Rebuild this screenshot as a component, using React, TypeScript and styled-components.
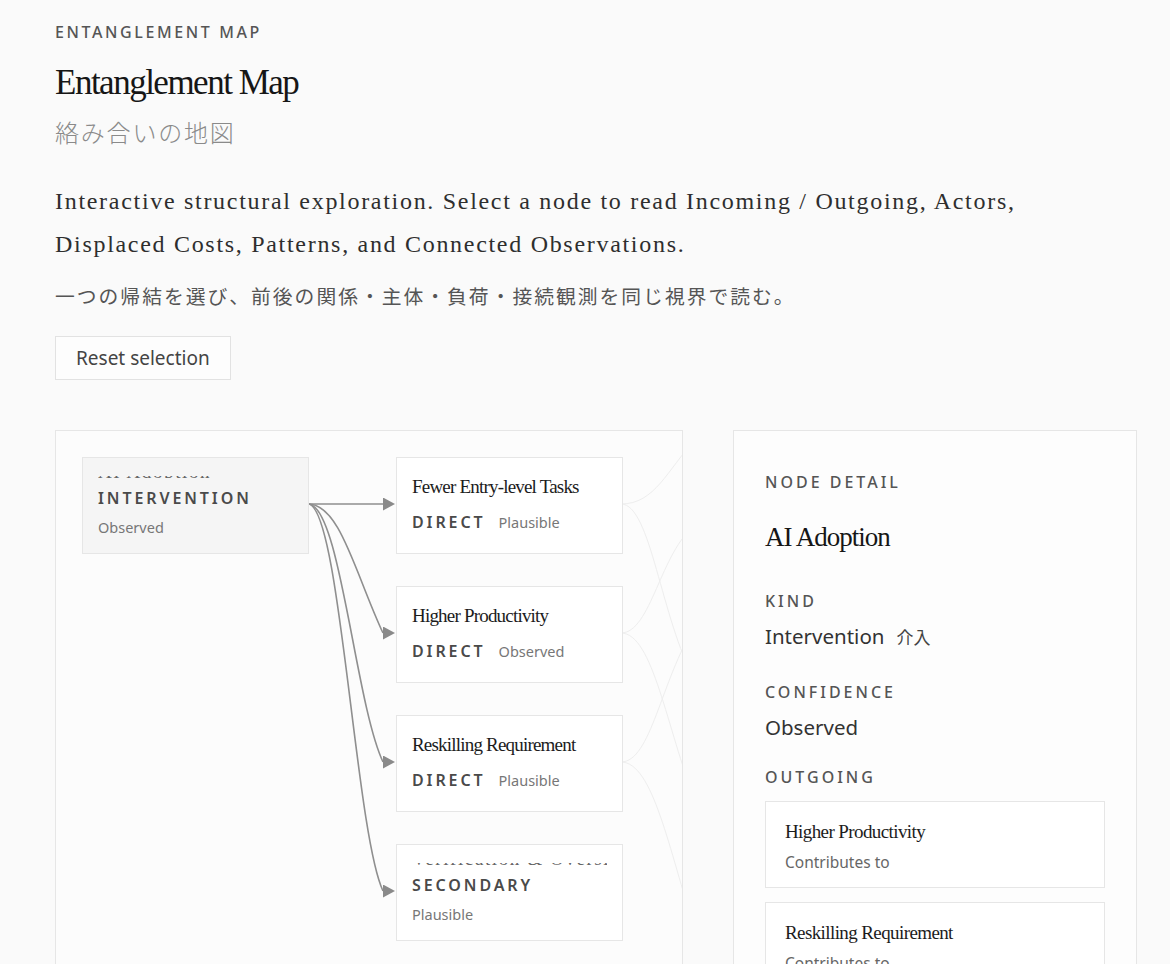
import React, { FC } from 'react';
import styled, { createGlobalStyle } from 'styled-components';

type MapNode = {
  id: string;
  title: string;
  kind: string;
  confidence: string;
  left: number;
  top: number;
  selected?: boolean;
  folded?: boolean;
};

type Outgoing = {
  title: string;
  relation: string;
};

const SANS = `'Noto Sans', 'Open Sans', 'Noto Sans CJK JP', sans-serif`;
const SERIF = `'Liberation Serif', 'Noto Sans CJK JP', serif`;
const JP = `'Noto Sans CJK JP', sans-serif`;

const NODES: MapNode[] = [
  { id: 'ai', title: 'AI Adoption', kind: 'INTERVENTION', confidence: 'Observed', left: 26, top: 26, selected: true, folded: true },
  { id: 'fewer', title: 'Fewer Entry-level Tasks', kind: 'DIRECT', confidence: 'Plausible', left: 340, top: 26 },
  { id: 'prod', title: 'Higher Productivity', kind: 'DIRECT', confidence: 'Observed', left: 340, top: 155 },
  { id: 'reskill', title: 'Reskilling Requirement', kind: 'DIRECT', confidence: 'Plausible', left: 340, top: 284 },
  { id: 'verify', title: 'Verification & Oversight Burden', kind: 'SECONDARY', confidence: 'Plausible', left: 340, top: 413, folded: true },
];

const OUTGOING: Outgoing[] = [
  { title: 'Higher Productivity', relation: 'Contributes to' },
  { title: 'Reskilling Requirement', relation: 'Contributes to' },
];

// edge geometry, in panel coordinates
const EDGE_START = { x: 253, y: 74 };
const EDGE_END_X = 328;
const TARGET_YS = [74, 203, 332, 461];

const edgePath = (y: number) => {
  if (y === EDGE_START.y) return `M${EDGE_START.x},${y} L${EDGE_END_X},${y}`;
  return `M${EDGE_START.x},${EDGE_START.y} C${EDGE_START.x + 32},${EDGE_START.y} ${EDGE_END_X - 28},${y - 60} ${EDGE_END_X},${y}`;
};

// faint links running off toward the next column
const FAINT_LINKS = [
  'M566,74 C596,74 606,190 640,250',
  'M566,203 C596,203 606,120 640,96',
  'M566,203 C598,203 612,300 640,370',
  'M566,332 C596,332 606,250 640,196',
  'M566,332 C598,332 614,420 640,500',
  'M566,74 C600,74 612,40 640,10',
];

const GlobalStyle = createGlobalStyle`
  html, body {
    margin: 0;
    background: #fafafa;
  }
  * {
    box-sizing: border-box;
  }
`;

const App: FC = () => {
  return (
    <>
      <GlobalStyle />
      <Page>
        <Eyebrow>ENTANGLEMENT MAP</Eyebrow>
        <Title>Entanglement Map</Title>
        <Subtitle>絡み合いの地図</Subtitle>
        <Lead>
          Interactive structural exploration. Select a node to read Incoming / Outgoing, Actors, Displaced Costs,
          Patterns, and Connected Observations.
        </Lead>
        <LeadJa>一つの帰結を選び、前後の関係・主体・負荷・接続観測を同じ視界で読む。</LeadJa>
        <ResetButton type="button">Reset selection</ResetButton>

        <Workspace>
          <GraphPanel>
            <EdgeLayer width="700" height="620" viewBox="0 0 700 620">
              <defs>
                <marker id="arrow" viewBox="0 0 12 13" refX="0" refY="6.5" markerWidth="12" markerHeight="13" markerUnits="userSpaceOnUse" orient="0">
                  <path d="M0,0 L12,6.5 L0,13 Z" fill="#8a8a8a" />
                </marker>
              </defs>
              {FAINT_LINKS.map((d) => (
                <path key={d} d={d} fill="none" stroke="#eeeeee" strokeWidth="1" />
              ))}
              {TARGET_YS.map((y) => (
                <path key={y} d={edgePath(y)} fill="none" stroke="#8f8f8f" strokeWidth="1.6" markerEnd="url(#arrow)" />
              ))}
            </EdgeLayer>

            {NODES.map((node) => (
              <NodeCard key={node.id} $selected={!!node.selected} style={{ left: node.left, top: node.top }}>
                {node.folded ? (
                  <>
                    <TitleFold>
                      <NodeTitle>{node.title}</NodeTitle>
                    </TitleFold>
                    <KindLabel $stacked>{node.kind}</KindLabel>
                    <Confidence $stacked>{node.confidence}</Confidence>
                  </>
                ) : (
                  <>
                    <NodeTitle>{node.title}</NodeTitle>
                    <MetaRow>
                      <KindLabel>{node.kind}</KindLabel>
                      <Confidence>{node.confidence}</Confidence>
                    </MetaRow>
                  </>
                )}
              </NodeCard>
            ))}
          </GraphPanel>

          <DetailPanel>
            <SectionLabel>NODE DETAIL</SectionLabel>
            <DetailTitle>AI Adoption</DetailTitle>

            <SectionLabel $gap={35}>KIND</SectionLabel>
            <DetailValue>
              Intervention<ValueNote>介入</ValueNote>
            </DetailValue>

            <SectionLabel $gap={29}>CONFIDENCE</SectionLabel>
            <DetailValue>Observed</DetailValue>

            <SectionLabel $gap={24}>OUTGOING</SectionLabel>
            <LinkList>
              {OUTGOING.map((link) => (
                <LinkCard key={link.title}>
                  <LinkTitle>{link.title}</LinkTitle>
                  <LinkRelation>{link.relation}</LinkRelation>
                </LinkCard>
              ))}
            </LinkList>
          </DetailPanel>
        </Workspace>
      </Page>
    </>
  );
};

const Page = styled.div`
  padding: 20px 33px 0 55px;
  height: 964px;
  overflow: hidden;
`;

const Eyebrow = styled.div`
  font-family: ${SANS};
  font-size: 16px;
  line-height: 24px;
  font-weight: 500;
  letter-spacing: 2.6px;
  color: #555;
`;

const Title = styled.h1`
  margin: 17px 0 0;
  font-family: ${SERIF};
  font-weight: 400;
  font-size: 35px;
  line-height: 44px;
  letter-spacing: -1.5px;
  color: #161616;
`;

const Subtitle = styled.div`
  margin-top: 9px;
  font-family: ${JP};
  font-weight: 300;
  font-size: 24px;
  line-height: 36px;
  letter-spacing: 1.8px;
  color: #8a8a8a;
`;

const Lead = styled.p`
  margin: 30px 0 0;
  max-width: 1000px;
  font-family: ${SERIF};
  font-size: 24px;
  line-height: 43px;
  letter-spacing: 1.7px;
  color: #2e2e2e;
`;

const LeadJa = styled.p`
  margin: 15px 0 0;
  font-family: ${JP};
  font-size: 19.8px;
  line-height: 30px;
  letter-spacing: 2px;
  color: #555;
`;

const ResetButton = styled.button`
  display: block;
  margin-top: 25px;
  height: 44px;
  padding: 0 20px;
  font-family: ${SANS};
  font-size: 19px;
  color: #444;
  background: #fdfdfd;
  border: 1px solid #e2e2e2;
  border-radius: 0;
  cursor: pointer;
`;

const Workspace = styled.div`
  display: grid;
  grid-template-columns: 628px 404px;
  gap: 50px;
  margin-top: 50px;
  align-items: start;
`;

const GraphPanel = styled.div`
  position: relative;
  height: 620px;
  background: #fcfcfc;
  border: 1px solid #e6e6e6;
  overflow: hidden;
`;

const EdgeLayer = styled.svg`
  position: absolute;
  left: -1px;
  top: -1px;
  pointer-events: none;
`;

const NodeCard = styled.div<{ $selected: boolean }>`
  position: absolute;
  width: 227px;
  height: 97px;
  padding: 15px 15px 0;
  background: ${({ $selected }) => ($selected ? '#f5f5f5' : '#fff')};
  border: 1px solid #e6e6e6;
  cursor: pointer;
`;

const NodeTitle = styled.div`
  font-family: ${SERIF};
  font-size: 19px;
  line-height: 28px;
  letter-spacing: -0.8px;
  color: #1c1c1c;
  white-space: nowrap;
`;

// collapsed title row: only the foot of the letters shows
const TitleFold = styled.div`
  height: 2px;
  margin: 3px 0 2px;
  overflow: hidden;

  ${NodeTitle} {
    margin-top: -18px;
    letter-spacing: 1.6px;
    color: #666;
  }
`;

const MetaRow = styled.div`
  display: flex;
  align-items: baseline;
  gap: 13px;
  margin-top: 9px;
`;

const KindLabel = styled.span<{ $stacked?: boolean }>`
  display: ${({ $stacked }) => ($stacked ? 'block' : 'inline')};
  margin-top: ${({ $stacked }) => ($stacked ? '8px' : '0')};
  font-family: ${SANS};
  font-size: 16px;
  line-height: 24px;
  font-weight: 600;
  letter-spacing: 2.9px;
  color: #4a4a4a;
`;

const Confidence = styled.span<{ $stacked?: boolean }>`
  display: ${({ $stacked }) => ($stacked ? 'block' : 'inline')};
  margin-top: ${({ $stacked }) => ($stacked ? '7px' : '0')};
  font-family: ${SANS};
  font-size: 14.5px;
  line-height: 20px;
  color: #777;
`;

const DetailPanel = styled.aside`
  height: 620px;
  padding: 40px 31px 0;
  background: #fdfdfd;
  border: 1px solid #e6e6e6;
  overflow: hidden;
`;

const SectionLabel = styled.div<{ $gap?: number }>`
  margin-top: ${({ $gap }) => $gap ?? 0}px;
  font-family: ${SANS};
  font-size: 16px;
  line-height: 22px;
  font-weight: 500;
  letter-spacing: 3px;
  color: #555;
`;

const DetailTitle = styled.h2`
  margin: 26px 0 0;
  font-family: ${SERIF};
  font-weight: 400;
  font-size: 27px;
  line-height: 36px;
  letter-spacing: -1px;
  color: #161616;
`;

const DetailValue = styled.div`
  margin-top: 9px;
  font-family: ${SANS};
  font-size: 20.5px;
  line-height: 30px;
  color: #333;
`;

const ValueNote = styled.span`
  margin-left: 12px;
  font-family: ${JP};
  font-size: 17px;
  color: #444;
`;

const LinkList = styled.div`
  display: flex;
  flex-direction: column;
  gap: 14px;
  margin-top: 13px;
`;

const LinkCard = styled.div`
  height: 87px;
  padding: 16px 19px 0;
  background: #fff;
  border: 1px solid #e6e6e6;
`;

const LinkTitle = styled.div`
  font-family: ${SERIF};
  font-size: 19px;
  line-height: 28px;
  letter-spacing: -0.6px;
  color: #1c1c1c;
`;

const LinkRelation = styled.div`
  margin-top: 5px;
  font-family: ${SANS};
  font-size: 15.5px;
  line-height: 22px;
  color: #666;
`;

export default App;
